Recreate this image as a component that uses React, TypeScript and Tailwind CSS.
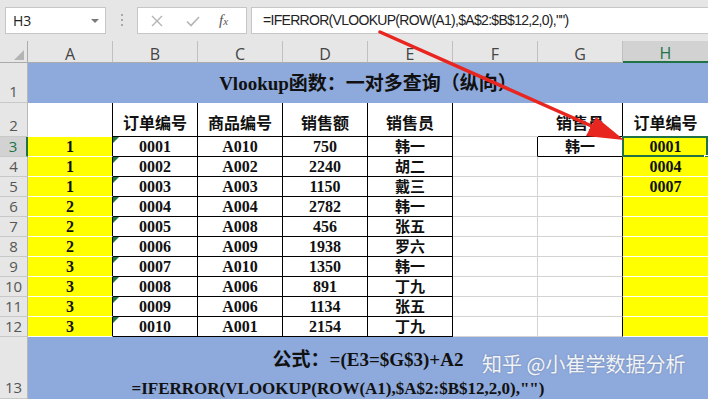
import React from 'react';

const serif = "font-['Liberation_Serif','Noto_Sans_CJK_SC',serif]";
const cjk = "font-['Noto_Sans_CJK_SC','Noto_Sans',sans-serif]";
const ui = "font-['Open_Sans','Noto_Sans','Noto_Sans_CJK_SC',sans-serif]";

const rows = [
  { a: '1', b: '0001', c: 'A010', d: '750', e: '韩一', h: '0001' },
  { a: '1', b: '0002', c: 'A002', d: '2240', e: '胡二', h: '0004' },
  { a: '1', b: '0003', c: 'A003', d: '1150', e: '戴三', h: '0007' },
  { a: '2', b: '0004', c: 'A004', d: '2782', e: '韩一', h: '' },
  { a: '2', b: '0005', c: 'A008', d: '456', e: '张五', h: '' },
  { a: '2', b: '0006', c: 'A009', d: '1938', e: '罗六', h: '' },
  { a: '3', b: '0007', c: 'A010', d: '1350', e: '韩一', h: '' },
  { a: '3', b: '0008', c: 'A006', d: '891', e: '丁九', h: '' },
  { a: '3', b: '0009', c: 'A006', d: '1134', e: '张五', h: '' },
  { a: '3', b: '0010', c: 'A001', d: '2154', e: '丁九', h: '' },
];

const cols = ['A', 'B', 'C', 'D', 'E', 'F', 'G', 'H'];

const RowHead = ({ n, active, bottom }: { n: string; active?: boolean; bottom?: boolean }) => (
  <div
    className={`${ui} flex justify-center border-b border-[#c8c8c8] text-[15px] leading-none ${
      bottom ? 'items-end pb-[3px]' : 'items-center'
    } ${active ? 'bg-[#d2d2d2] text-[#217346] border-r-2 border-r-[#217346]' : 'bg-[#e6e6e6] text-[#555] border-r border-r-[#b8b8b8]'}`}
  >
    {n}
  </div>
);

const Tri = () => (
  <div className="absolute left-0 top-0 w-0 h-0 border-t-[6px] border-t-[#1f7a35] border-r-[6px] border-r-transparent" />
);

const App: React.FC = () => {
  return (
    <div className="relative w-[708px] h-[399px] overflow-hidden bg-white">
      {/* Formula bar */}
      <div className="h-[41px] bg-[#e6e6e6] flex items-start pt-[7px]">
        <div className={`${ui} ml-[5px] w-[101px] h-[27px] bg-white border border-[#c6c6c6] flex items-center justify-between pl-[7px] pr-[6px] text-[14px] text-[#222]`}>
          <span>H3</span>
          <span className="w-0 h-0 border-l-[4px] border-r-[4px] border-t-[4px] border-l-transparent border-r-transparent border-t-[#7a7a7a]" />
        </div>
        <div className="ml-[15px] mt-[7px] flex flex-col gap-[3px]">
          <span className="w-[2px] h-[2px] bg-[#a8a8a8]" />
          <span className="w-[2px] h-[2px] bg-[#a8a8a8]" />
          <span className="w-[2px] h-[2px] bg-[#a8a8a8]" />
        </div>
        <div className="ml-[14px] w-[110px] h-[27px] bg-white border border-[#c6c6c6] flex items-center">
          <svg width="14" height="14" viewBox="0 0 14 14" className="ml-[12px]">
            <path d="M2 2 L12 12 M12 2 L2 12" stroke="#b4b4b4" strokeWidth="1.4" />
          </svg>
          <svg width="16" height="14" viewBox="0 0 16 14" className="ml-[21px]">
            <path d="M2 7.5 L6 11.5 L14 3" stroke="#b4b4b4" strokeWidth="1.6" fill="none" />
          </svg>
          <span className="ml-[18px] font-['Liberation_Serif',serif] italic text-[15px] text-[#555] leading-none">
            f<span className="text-[11px]">x</span>
          </span>
        </div>
        <div className="ml-[4px] flex-1 h-[27px] bg-white border border-r-0 border-[#c6c6c6] flex items-center pl-[11px] font-['Liberation_Sans','Noto_Sans',sans-serif] text-[14px] tracking-[-0.7px] text-[#222] whitespace-nowrap">
          =IFERROR(VLOOKUP(ROW(A1),$A$2:$B$12,2,0),"")
        </div>
      </div>

      {/* Sheet */}
      <div className="grid grid-cols-[28px_repeat(8,85px)] grid-rows-[22px_40px_34px_repeat(10,20px)_62px]">
        {/* column headers */}
        <div className="bg-[#e6e6e6] border-r border-b border-[#ababab] relative">
          <div className="absolute right-[3px] bottom-[2px] w-0 h-0 border-l-[10px] border-l-transparent border-b-[10px] border-b-[#b4b4b4]" />
        </div>
        {cols.map((c) => (
          <div
            key={c}
            className={`${ui} flex items-end justify-center text-[16px] leading-none ${
              c === 'H'
                ? 'bg-[#d2d2d2] text-[#217346] border-b-2 border-b-[#217346]'
                : 'bg-[#e6e6e6] text-[#444] border-r border-r-[#c0c0c0] border-b border-b-[#ababab]'
            }`}
          >
            {c}
          </div>
        ))}

        {/* row 1 */}
        <RowHead n="1" bottom />
        <div className="col-span-8 bg-[#8ea9db] flex items-center justify-center">
          <span className={`${serif} font-bold text-[19px] text-[#111]`}>
            Vlookup<span className={cjk}>函数：一对多查询（纵向）</span>
          </span>
        </div>

        {/* row 2 */}
        <RowHead n="2" bottom />
        <div className="bg-white border-r border-black" />
        {['订单编号', '商品编号', '销售额', '销售员'].map((t) => (
          <div key={t} className={`${cjk} font-bold text-[16px] leading-none text-[#111] flex items-center justify-center pt-[5px] border-r border-b border-black`}>
            {t}
          </div>
        ))}
        <div className="border-b border-[#d4d4d4]" />
        <div className={`${cjk} font-bold text-[16px] leading-none text-[#111] flex items-center justify-center pt-[5px] border-r border-b border-black`}>销售员</div>
        <div className={`${cjk} font-bold text-[16px] leading-none text-[#111] flex items-center justify-center pt-[5px] border-b border-black`}>订单编号</div>

        {/* data rows */}
        {rows.map((r, i) => (
          <React.Fragment key={i}>
            <RowHead n={String(i + 3)} active={i === 0} />
            <div className={`${serif} font-bold text-[16px] leading-none text-[#111] bg-[#ffff00] flex items-center justify-center border-b border-b-white border-r border-r-black`}>
              {r.a}
            </div>
            {[r.b, r.c, r.d].map((v, j) => (
              <div key={j} className={`${serif} relative font-bold text-[16px] leading-none text-[#111] flex items-center justify-center border-r border-b border-black`}>
                {j === 0 && <Tri />}
                {v}
              </div>
            ))}
            <div className={`${cjk} font-bold text-[15px] leading-[15px] text-[#111] flex items-center justify-center pb-[2px] border-r border-b border-black`}>
              {r.e}
            </div>
            <div className={`border-b border-b-[#d4d4d4] border-r ${i === 0 ? 'border-r-black' : 'border-r-[#d4d4d4]'}`} />
            {i === 0 ? (
              <div className={`${cjk} font-bold text-[15px] leading-[15px] text-[#111] flex items-center justify-center pb-[2px] border-r border-b border-black`}>韩一</div>
            ) : (
              <div className="border-r border-r-black border-b border-b-[#d4d4d4]" />
            )}
            <div className={`${serif} relative font-bold text-[16px] leading-none text-[#111] bg-[#ffff00] flex items-center justify-center border-b border-b-white`}>
              {r.h}
              {i === 0 && (
                <>
                  <div className="absolute -left-[1px] -top-[1px] right-0 -bottom-[1px] border-2 border-[#217346]" />
                  <div className="absolute -right-[1px] -bottom-[4px] w-[5px] h-[5px] bg-[#217346] border border-white" />
                </>
              )}
            </div>
          </React.Fragment>
        ))}

        {/* row 13 */}
        <RowHead n="13" bottom />
        <div className={`${serif} col-span-8 bg-[#8ea9db] flex flex-col items-center pt-[6px] font-bold leading-[29px] text-[#111]`}>
          <span className="text-[19px]">
            <span className={cjk}>公式：</span>=(E3=$G$3)+A2
          </span>
          <span className="text-[17px] pr-[60px]">=IFERROR(VLOOKUP(ROW(A1),$A$2:$B$12,2,0),"")</span>
        </div>
      </div>

      {/* watermark */}
      <div className={`${cjk} absolute left-[482px] top-[354px] text-[20px] leading-none text-white/90 whitespace-nowrap [text-shadow:0_0_2px_rgba(0,0,0,0.25)]`}>
        知乎 @小崔学数据分析
      </div>

      {/* red arrow */}
      <svg className="absolute left-0 top-0 pointer-events-none" width="708" height="399">
        <line x1="380" y1="32" x2="596" y2="128" stroke="#e8261f" strokeWidth="3.5" strokeLinecap="round" />
        <polygon points="624,140 586,136 596,117" fill="#e8261f" />
      </svg>
    </div>
  );
};

export default App;
